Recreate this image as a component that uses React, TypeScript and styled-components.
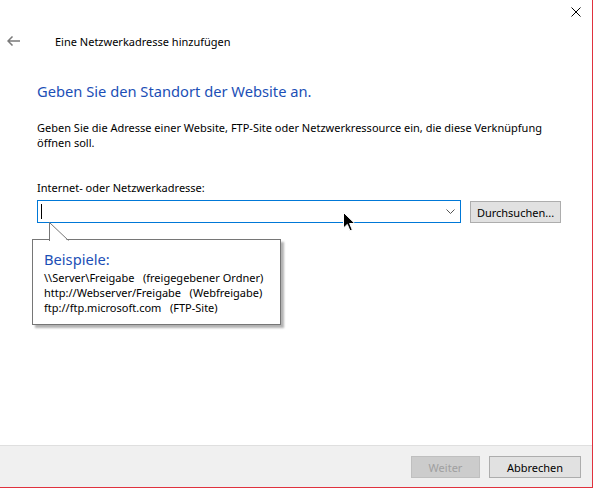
import React from "react";
import styled, { createGlobalStyle } from "styled-components";

const Global = createGlobalStyle`
  html, body { margin: 0; padding: 0; background: #ffffff; }
  body { font-family: "Noto Sans", "Open Sans", sans-serif; font-size: 11px; color: #000; }
  * { box-sizing: border-box; }
`;

const Window = styled.div`
  position: relative;
  width: 593px;
  height: 488px;
  background: #ffffff;
  border-right: 1px solid #e0323e;
  border-bottom: 1px solid #e0323e;
  display: flex;
  flex-direction: column;
  overflow: hidden;
`;

const TitleBar = styled.div`
  height: 30px;
  display: flex;
  justify-content: flex-end;
  align-items: center;
`;

const CloseButton = styled.div`
  width: 32px;
  height: 24px;
  display: flex;
  align-items: center;
  justify-content: center;
  margin-top: -6px;
`;

const NavRow = styled.div`
  height: 24px;
  display: flex;
  align-items: center;
  margin-top: -1px;
`;

const BackArrow = styled.div`
  width: 26px;
  display: flex;
  justify-content: center;
  margin-right: 29px;
`;

const Title = styled.div`
  font-size: 11px;
  color: #000;
`;

const Content = styled.div`
  padding: 0 0 0 37px;
  display: flex;
  flex-direction: column;
  flex: 1;
`;

const Heading = styled.div`
  margin-top: 28px;
  font-size: 14.7px;
  line-height: 20px;
  color: #1c4fb6;
`;

const Body = styled.div`
  margin-top: 19px;
  width: 530px;
  font-size: 11px;
  line-height: 15px;
`;

const Label = styled.div`
  margin-top: 30px;
  font-size: 11px;
  line-height: 15px;
`;

const InputRow = styled.div`
  margin-top: 5px;
  display: flex;
  align-items: flex-start;
  gap: 9px;
`;

const Combo = styled.div`
  width: 424px;
  height: 23px;
  border: 1px solid #0078d7;
  display: flex;
  align-items: center;
  justify-content: space-between;
  padding: 0 5px 0 3px;
`;

const Caret = styled.div`
  width: 1px;
  height: 15px;
  background: #000;
`;

const Button = styled.div<{ $disabled?: boolean; $width: number }>`
  width: ${(p) => p.$width}px;
  height: 22px;
  display: flex;
  align-items: center;
  justify-content: center;
  font-size: 11px;
  background: ${(p) => (p.$disabled ? "#cccccc" : "#e1e1e1")};
  border: 1px solid ${(p) => (p.$disabled ? "#bfbfbf" : "#adadad")};
  color: ${(p) => (p.$disabled ? "#a0a0a0" : "#000")};
`;

const BrowseButton = styled(Button)`
  margin-top: 1px;
`;

const Footer = styled.div`
  height: 42px;
  background: #f0f0f0;
  border-top: 1px solid #dfdfdf;
  display: flex;
  justify-content: flex-end;
  align-items: flex-start;
  padding: 10px 11px 0 0;
  gap: 9px;
`;

const Balloon = styled.div`
  position: absolute;
  left: 32px;
  top: 239px;
  width: 249px;
  height: 86px;
  border: 1px solid #767676;
  background: #fff;
  box-shadow: 3px 3px 2px rgba(0, 0, 0, 0.3);
  padding: 9px 0 0 11px;
`;

const Tail = styled.svg`
  position: absolute;
  left: 15px;
  top: -18px;
`;

const BalloonTitle = styled.div`
  font-size: 14.7px;
  line-height: 20px;
  color: #1c4fb6;
  margin-bottom: 1px;
`;

const BalloonLine = styled.div`
  font-size: 11px;
  line-height: 15px;
  white-space: pre;
`;

const Cursor = styled.svg`
  position: absolute;
  left: 343px;
  top: 212px;
`;

export default function App() {
  return (
    <>
      <Global />
      <Window>
        <TitleBar>
          <CloseButton>
            <svg width="10" height="10" viewBox="0 0 10 10">
              <path d="M0.5 0.5 L9.5 9.5 M9.5 0.5 L0.5 9.5" stroke="#000" strokeWidth="1" />
            </svg>
          </CloseButton>
        </TitleBar>
        <NavRow>
          <BackArrow>
            <svg width="13" height="10" viewBox="0 0 13 10">
              <path d="M5.5 0.5 L1 5 L5.5 9.5 M1 5 H13" stroke="#7a7a7a" strokeWidth="1.5" fill="none" />
            </svg>
          </BackArrow>
          <Title>Eine Netzwerkadresse hinzufügen</Title>
        </NavRow>
        <Content>
          <Heading>Geben Sie den Standort der Website an.</Heading>
          <Body>
            Geben Sie die Adresse einer Website, FTP-Site oder Netzwerkressource ein, die diese Verknüpfung öffnen soll.
          </Body>
          <Label>Internet- oder Netzwerkadresse:</Label>
          <InputRow>
            <Combo>
              <Caret />
              <svg width="9" height="5" viewBox="0 0 9 5">
                <path d="M0.5 0.5 L4.5 4.5 L8.5 0.5" stroke="#555" strokeWidth="1" fill="none" />
              </svg>
            </Combo>
            <BrowseButton $width={91}>Durchsuchen...</BrowseButton>
          </InputRow>
        </Content>
        <Footer>
          <Button $disabled $width={69}>Weiter</Button>
          <Button $width={92}>Abbrechen</Button>
        </Footer>
        <Balloon>
          <Tail width="22" height="19" viewBox="0 0 22 19">
            <path d="M0 19 L1 19 L1 1 L20 19 L22 19" fill="#fff" stroke="none" />
            <path d="M1.5 19 L1.5 0.5 L20.5 18.5" fill="none" stroke="#767676" strokeWidth="1" />
          </Tail>
          <BalloonTitle>Beispiele:</BalloonTitle>
          <BalloonLine>{"\\\\Server\\Freigabe   (freigegebener Ordner)"}</BalloonLine>
          <BalloonLine>{"http://Webserver/Freigabe   (Webfreigabe)"}</BalloonLine>
          <BalloonLine>{"ftp://ftp.microsoft.com   (FTP-Site)"}</BalloonLine>
        </Balloon>
        <Cursor width="13" height="20" viewBox="0 0 13 20">
          <path d="M0.5 0.5 L0.5 16 L4.3 12.4 L7 18.8 L9.3 17.8 L6.6 11.5 L11.8 11.5 Z" fill="#000" stroke="#fff" strokeWidth="1" />
        </Cursor>
      </Window>
    </>
  );
}
